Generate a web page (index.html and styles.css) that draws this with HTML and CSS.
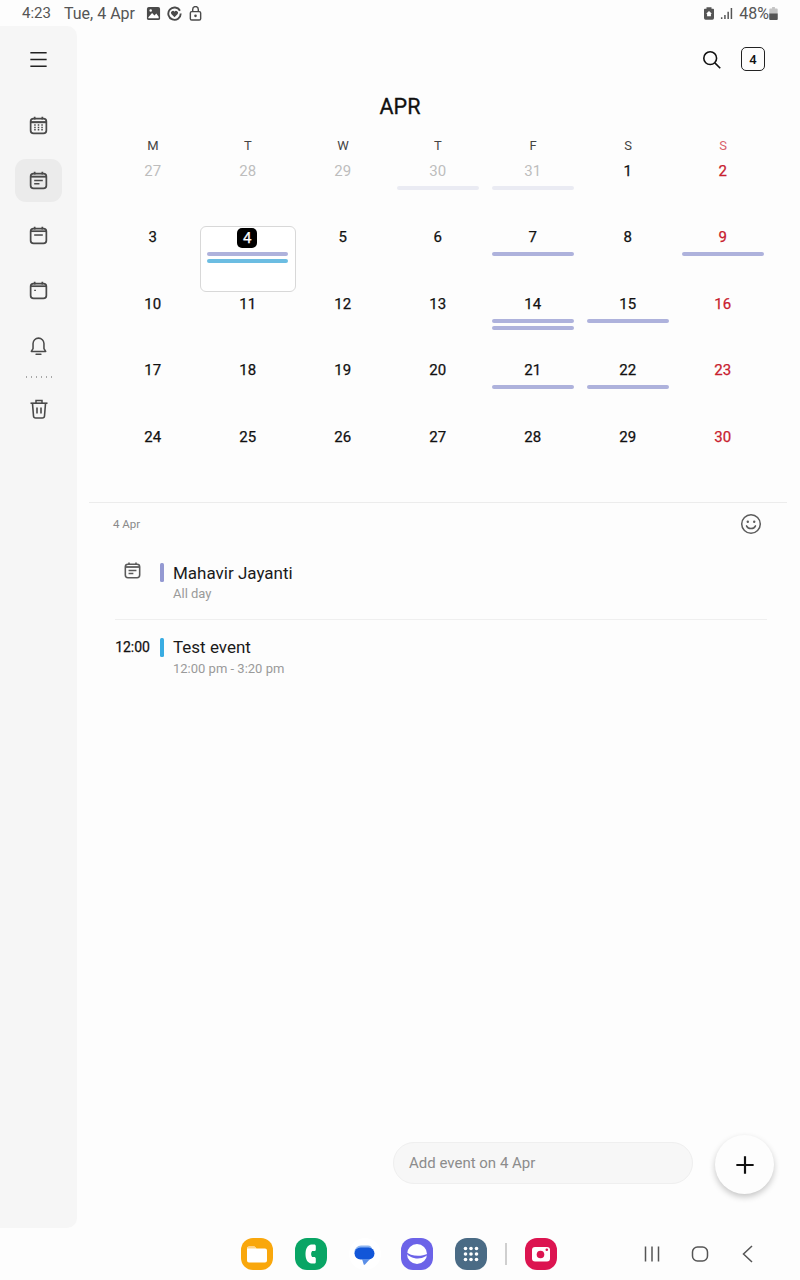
FILE: index.html
```html
<!DOCTYPE html>
<html lang="en">
<head>
<meta charset="utf-8">
<title>Calendar</title>
<link rel="stylesheet" href="styles.css">
</head>
<body>
<div class="status">
  <span class="st-time">4:23</span>
  <span class="st-date">Tue, 4 Apr</span>
  <svg class="st-ico" viewBox="0 0 16 16"><rect x="1" y="1" width="14" height="14" rx="2" fill="#4a4a4a"/><path d="M2.500 12 6.500 7.500 9 10l2-2 2.500 3.500V13h-11z" fill="#fff"/><circle cx="5" cy="4.800" r="1.300" fill="#fff"/></svg>
  <svg class="st-ico" viewBox="0 0 16 16"><path d="M13.800 5A6.600 6.600 0 1 0 14.600 8" fill="none" stroke="#4a4a4a" stroke-width="2"/><path d="M8 12 4.600 8.400a2 2 0 0 1 3.400-2.400 2 2 0 0 1 3.400 2.400z" fill="#4a4a4a"/></svg>
  <svg class="st-ico" viewBox="0 0 16 16"><rect x="2.500" y="6" width="11" height="9" rx="1.500" fill="none" stroke="#4a4a4a" stroke-width="1.500"/><path d="M5 6V3.600a3 3 0 0 1 6 0V6" fill="none" stroke="#4a4a4a" stroke-width="1.500"/><circle cx="8" cy="10.500" r="1.400" fill="#4a4a4a"/></svg>
  <span class="st-fill"></span>
  <svg class="st-alarm" viewBox="0 0 12 16"><path d="M3 1h6v2h2a1 1 0 0 1 1 1v10a2 2 0 0 1-2 2H2a2 2 0 0 1-2-2V4a1 1 0 0 1 1-1h2z" fill="#555"/><path d="M6 5.500 9.500 9H8.300v3H3.700V9H2.500z" fill="#fff"/></svg>
  <svg class="st-signal" viewBox="0 0 14 14"><path d="M1 11h1.600v2H1zM4.500 8.500h1.600V13H4.500zM8 5h1.600v8H8zM11.500 1h1.600v12h-1.600z" fill="#555"/></svg>
  <span class="st-pct">48%</span>
  <svg class="st-batt" viewBox="0 0 9 14"><path d="M3 0h3v1.500h2a1 1 0 0 1 1 1V13a1 1 0 0 1-1 1H1a1 1 0 0 1-1-1V2.500a1 1 0 0 1 1-1h2z" fill="#c4c4c4"/><path d="M0 7h9v6a1 1 0 0 1-1 1H1a1 1 0 0 1-1-1z" fill="#555"/></svg>
</div>

<div class="shell">
  <nav class="side">
    <div class="side-item menu">
      <svg class="side-ico" viewBox="0 0 24 24"><path d="M3.500 5h17M3.500 12h17M3.500 19h17" stroke="#222" stroke-width="1.700" fill="none"/></svg>
    </div>
    <div class="side-item">
      <svg class="side-ico" viewBox="0 0 24 24"><rect x="3.800" y="4.800" width="16.400" height="15.400" rx="3" fill="none" stroke="#4a4a4a" stroke-width="1.800"/><path d="M3.800 8.500h16.400" stroke="#4a4a4a" stroke-width="2.200"/><path d="M8 2.800v3M16 2.800v3" stroke="#4a4a4a" stroke-width="1.800"/><path d="M7.500 11.500h1.600M11.200 11.500h1.600M14.900 11.500h1.600M7.500 14h1.600M11.200 14h1.600M14.900 14h1.600M7.500 16.500h1.600M11.200 16.500h1.600M14.900 16.500h1.600" stroke="#4a4a4a" stroke-width="1.500"/></svg>
    </div>
    <div class="side-item active">
      <svg class="side-ico" viewBox="0 0 24 24"><rect x="3.800" y="4.800" width="16.400" height="15.400" rx="3" fill="none" stroke="#4a4a4a" stroke-width="1.800"/><path d="M3.800 8h16.400" stroke="#4a4a4a" stroke-width="2"/><path d="M8 2.800v3M16 2.800v3" stroke="#4a4a4a" stroke-width="1.800"/><path d="M7.500 12h9M7.500 15.500h5.500" stroke="#4a4a4a" stroke-width="1.600"/></svg>
    </div>
    <div class="side-item">
      <svg class="side-ico" viewBox="0 0 24 24"><rect x="3.800" y="4.800" width="16.400" height="15.400" rx="3" fill="none" stroke="#4a4a4a" stroke-width="1.800"/><path d="M3.800 7.500h16.400" stroke="#4a4a4a" stroke-width="1.800"/><path d="M8 2.800v3M16 2.800v3" stroke="#4a4a4a" stroke-width="1.800"/><path d="M7.500 11.500h9" stroke="#4a4a4a" stroke-width="1.600"/></svg>
    </div>
    <div class="side-item">
      <svg class="side-ico" viewBox="0 0 24 24"><rect x="3.800" y="4.800" width="16.400" height="15.400" rx="3" fill="none" stroke="#4a4a4a" stroke-width="1.800"/><path d="M3.800 7.500h16.400" stroke="#4a4a4a" stroke-width="1.800"/><path d="M8 2.800v3M16 2.800v3" stroke="#4a4a4a" stroke-width="1.800"/><path d="M7.500 11.800h1.800" stroke="#4a4a4a" stroke-width="1.400"/></svg>
    </div>
    <div class="side-item">
      <svg class="side-ico" viewBox="0 0 24 24"><path d="M4.500 18.200h15l-1.800-3V10a5.700 5.700 0 0 0-11.400 0v5.200z" fill="none" stroke="#4a4a4a" stroke-width="1.600" stroke-linejoin="round"/><path d="M9.500 21.200h5" stroke="#4a4a4a" stroke-width="1.600" stroke-linecap="round"/></svg>
    </div>
    <div class="side-dots"></div>
    <div class="side-item">
      <svg class="side-ico trash" viewBox="0 0 24 24"><path d="M3.500 6.200h17" stroke="#4a4a4a" stroke-width="1.600"/><path d="M9 6V3.500h6V6" fill="none" stroke="#4a4a4a" stroke-width="1.500"/><path d="M5.500 6.500 6.500 19a2.200 2.200 0 0 0 2.200 2h6.600a2.200 2.200 0 0 0 2.200-2l1-12.500" fill="none" stroke="#4a4a4a" stroke-width="1.600"/><path d="M10 10.500v6M14 10.500v6" stroke="#4a4a4a" stroke-width="1.600"/></svg>
    </div>
  </nav>

  <main class="main">
    <div class="toolbar">
      <svg class="search" viewBox="0 0 24 24"><circle cx="10.500" cy="10.500" r="7.300" fill="none" stroke="#111" stroke-width="1.800"/><path d="M15.800 15.800 22 22" stroke="#111" stroke-width="1.800"/></svg>
      <span class="today">4</span>
    </div>
    <h1 class="month">APR</h1>
    <div class="weekdays">
      <span>M</span><span>T</span><span>W</span><span>T</span><span>F</span><span>S</span><span class="sun">S</span>
    </div>
    <div class="grid">
      <div class="cell off"><span class="num">27</span></div>
      <div class="cell off"><span class="num">28</span></div>
      <div class="cell off"><span class="num">29</span></div>
      <div class="cell off"><span class="num">30</span><i class="bar faint"></i></div>
      <div class="cell off"><span class="num">31</span><i class="bar faint"></i></div>
      <div class="cell"><span class="num">1</span></div>
      <div class="cell red"><span class="num">2</span></div>

      <div class="cell"><span class="num">3</span></div>
      <div class="cell selected"><span class="num">4</span><i class="bar"></i><i class="bar blue"></i></div>
      <div class="cell"><span class="num">5</span></div>
      <div class="cell"><span class="num">6</span></div>
      <div class="cell"><span class="num">7</span><i class="bar"></i></div>
      <div class="cell"><span class="num">8</span></div>
      <div class="cell red"><span class="num">9</span><i class="bar"></i></div>

      <div class="cell"><span class="num">10</span></div>
      <div class="cell"><span class="num">11</span></div>
      <div class="cell"><span class="num">12</span></div>
      <div class="cell"><span class="num">13</span></div>
      <div class="cell"><span class="num">14</span><i class="bar"></i><i class="bar"></i></div>
      <div class="cell"><span class="num">15</span><i class="bar"></i></div>
      <div class="cell red"><span class="num">16</span></div>

      <div class="cell"><span class="num">17</span></div>
      <div class="cell"><span class="num">18</span></div>
      <div class="cell"><span class="num">19</span></div>
      <div class="cell"><span class="num">20</span></div>
      <div class="cell"><span class="num">21</span><i class="bar"></i></div>
      <div class="cell"><span class="num">22</span><i class="bar"></i></div>
      <div class="cell red"><span class="num">23</span></div>

      <div class="cell"><span class="num">24</span></div>
      <div class="cell"><span class="num">25</span></div>
      <div class="cell"><span class="num">26</span></div>
      <div class="cell"><span class="num">27</span></div>
      <div class="cell"><span class="num">28</span></div>
      <div class="cell"><span class="num">29</span></div>
      <div class="cell red"><span class="num">30</span></div>
    </div>

    <div class="rule"></div>
    <div class="day-head">
      <span class="day-label">4 Apr</span>
      <svg class="smile" viewBox="0 0 22 22"><circle cx="11" cy="11" r="9.300" fill="none" stroke="#5c5c5c" stroke-width="1.500"/><circle cx="7.800" cy="8.800" r="1.200" fill="#5c5c5c"/><circle cx="14.200" cy="8.800" r="1.200" fill="#5c5c5c"/><path d="M6.500 12.800a5 5 0 0 0 9 0" fill="none" stroke="#5c5c5c" stroke-width="1.500" stroke-linecap="round"/></svg>
    </div>

    <div class="event first">
      <div class="ev-lead">
        <svg class="ev-ico" viewBox="0 0 24 24"><rect x="3.800" y="4.800" width="16.400" height="15.400" rx="3" fill="none" stroke="#5a5a5a" stroke-width="1.800"/><path d="M3.800 8h16.400" stroke="#5a5a5a" stroke-width="2"/><path d="M8 2.800v3M16 2.800v3" stroke="#5a5a5a" stroke-width="1.800"/><path d="M7.500 12h9M7.500 15.500h5.500" stroke="#5a5a5a" stroke-width="1.600"/></svg>
      </div>
      <i class="ev-bar"></i>
      <div class="ev-text">
        <div class="ev-title">Mahavir Jayanti</div>
        <div class="ev-sub">All day</div>
      </div>
    </div>
    <div class="ev-rule"></div>
    <div class="event">
      <div class="ev-lead"><span class="ev-time">12:00</span></div>
      <i class="ev-bar blue"></i>
      <div class="ev-text">
        <div class="ev-title">Test event</div>
        <div class="ev-sub">12:00 pm - 3:20 pm</div>
      </div>
    </div>

    <div class="add-row">
      <div class="add-input">Add event on 4 Apr</div>
      <div class="fab"><svg viewBox="0 0 22 22"><path d="M11 1.500v19M1.500 11h19" stroke="#111" stroke-width="2.400"/></svg></div>
    </div>
  </main>
</div>

<footer class="dock">
  <div class="apps">
    <span class="app files"><svg viewBox="0 0 32 32"><path d="M6 10.500A2 2 0 0 1 8 8.500h5.500l2 2H24a2 2 0 0 1 2 2v10a2 2 0 0 1-2 2H8a2 2 0 0 1-2-2z" fill="#fff"/><path d="M6 10.500A2 2 0 0 1 8 8.500h5.500l2 2H6z" fill="#ffd58a"/></svg></span>
    <span class="app phone"><svg viewBox="0 0 32 32"><path d="M19 6.500h-2.500C12.500 7 10.500 10.500 10.500 16s2 9 6 9.500H19c1.200 0 1.800-.7 1.800-1.600v-3.300c0-.9-.7-1.600-1.700-1.600h-2c-.7-1-1-2-1-3s.3-2 1-3h2c1 0 1.700-.7 1.700-1.600V8.100c0-.9-.6-1.600-1.800-1.600z" fill="#fff"/></svg></span>
    <span class="app msg"><svg viewBox="0 0 32 32"><path d="M5.500 14a6.500 6.500 0 0 1 6.500-6.500h7a4 4 0 0 1 4 3.500H12c-2.500 0-4.500 1.500-5 4.500-.5 0-1.500-.5-1.500-1.500z" fill="#8db4f0"/><rect x="5.500" y="9.500" width="20" height="12" rx="6" fill="#1256d8"/><path d="M13 21h8l-5 5.500c-.8.500-1.500 0-1.500-.8z" fill="#5b8fe8"/></svg></span>
    <span class="app net"><svg viewBox="0 0 32 32"><circle cx="16" cy="16" r="10" fill="#fff"/><path d="M4.500 13.500c5 4.500 14 6 23 2 -.5 2-7 6.500-14.500 4.500-5-1.300-8-4-8.500-6.500z" fill="#6c63e8"/></svg></span>
    <span class="app grid-app"><svg viewBox="0 0 32 32"><g fill="#fff"><circle cx="10.500" cy="10.500" r="1.800"/><circle cx="16" cy="10.500" r="1.800"/><circle cx="21.500" cy="10.500" r="1.800"/><circle cx="10.500" cy="16" r="1.800"/><circle cx="16" cy="16" r="1.800"/><circle cx="21.500" cy="16" r="1.800"/><circle cx="10.500" cy="21.500" r="1.800"/><circle cx="16" cy="21.500" r="1.800"/><circle cx="21.500" cy="21.500" r="1.800"/></g></svg></span>
    <i class="dock-sep"></i>
    <span class="app cam"><svg viewBox="0 0 32 32"><rect x="7" y="9" width="18" height="14.500" rx="3" fill="#fff"/><circle cx="15.500" cy="16.500" r="3.800" fill="#dc1450"/><circle cx="21.800" cy="11.800" r="1.300" fill="#dc1450"/></svg></span>
  </div>
  <div class="sysnav">
    <svg viewBox="0 0 20 20"><path d="M3.500 2.500v15M10 2.500v15M16.500 2.500v15" stroke="#555" stroke-width="1.500" fill="none"/></svg>
    <svg viewBox="0 0 20 20"><rect x="2.500" y="3" width="15" height="14" rx="5" stroke="#555" stroke-width="1.500" fill="none"/></svg>
    <svg viewBox="0 0 20 20"><path d="M14 2 5.500 10l8.500 8" stroke="#555" stroke-width="1.500" fill="none"/></svg>
  </div>
</footer>
</body>
</html>
```
FILE: styles.css
```css
* { box-sizing: border-box; }
html, body { margin: 0; padding: 0; }
body {
  width: 800px;
  height: 1280px;
  overflow: hidden;
  background: #fdfdfd;
  font-family: Roboto, "Liberation Sans", sans-serif;
  color: #111;
  display: flex;
  flex-direction: column;
}

/* status bar */
.status {
  height: 26px;
  flex: none;
  display: flex;
  align-items: center;
  padding: 0 22px;
  font-size: 15px;
  color: #555;
}
.st-date { font-size: 16px; margin-left: 13px; margin-right: 11px; }
.st-ico { width: 15px; height: 15px; margin-right: 6px; }
.st-fill { flex: 1; }
.st-alarm { width: 10px; height: 14px; margin-right: 6px; }
.st-signal { width: 13px; height: 13px; margin-right: 6px; }
.st-pct { font-size: 16px; }
.st-batt { width: 9px; height: 13px; }

/* frame */
.shell { flex: 1; display: flex; min-height: 0; }

.side {
  width: 77px;
  flex: none;
  background: #f6f6f6;
  border-radius: 0 10px 10px 0;
  padding: 11px 15px 0;
  display: flex;
  flex-direction: column;
  gap: 12px;
}
.side-item {
  width: 47px;
  height: 43px;
  flex: none;
  border-radius: 11px;
  display: flex;
  align-items: center;
  justify-content: center;
}
.side-item.menu { margin-top: 1px; margin-bottom: 11px; }
.side-item.active { background: #ebebeb; }
.side-ico { width: 23px; height: 23px; }
.side-ico.trash { width: 24px; height: 24px; }
.side-dots {
  height: 2px;
  width: 30px;
  flex: none;
  margin: -3px 0 -3px 9px;
  background: radial-gradient(circle at center, #a8a8a8 0 .8px, transparent 1px) 0 0 / 5px 2px repeat-x;
}

/* main */
.main { flex: 1; min-width: 0; display: flex; flex-direction: column; }

.toolbar {
  height: 66px;
  flex: none;
  display: flex;
  align-items: center;
  justify-content: flex-end;
  padding-right: 35px;
  gap: 19px;
}
.search { width: 21px; height: 21px; }
.today {
  width: 24px;
  height: 24px;
  border: 1.700px solid #222;
  border-radius: 5px;
  font-size: 13px;
  font-weight: 500;
  display: flex;
  align-items: center;
  justify-content: center;
}

.month {
  margin: 0;
  height: 28px;
  line-height: 30px;
  padding-right: 77px;
  text-align: center;
  font-size: 21.500px;
  font-weight: 400;
  -webkit-text-stroke: .3px #111;
  color: #111;
}

.weekdays, .grid {
  display: grid;
  grid-template-columns: repeat(7, 95px);
  margin-left: 28.500px;
}
.weekdays {
  margin-top: 15.500px;
  margin-bottom: 5px;
  height: 19px;
  line-height: 19px;
  text-align: center;
  font-size: 13px;
  color: #444;
}
.weekdays .sun { color: #d9626c; }

.grid { grid-auto-rows: 66.500px; }
.cell {
  display: flex;
  flex-direction: column;
  align-items: center;
  padding: 0 6.500px 0 6px;
  font-size: 15px;
  font-weight: 400;
  -webkit-text-stroke: .25px currentColor;
  color: #111;
}
.num {
  height: 23px;
  min-width: 20px;
  line-height: 23px;
  text-align: center;
  margin-bottom: 3px;
}
.off { color: #bdbdbd; -webkit-text-stroke: 0; }
.red { color: #c8202e; }

.bar {
  display: block;
  width: 100%;
  height: 4px;
  flex: none;
  border-radius: 2px;
  background: #aeb2dc;
  margin-bottom: 3px;
}
.bar.faint { background: #eaebf3; }
.bar.blue { background: #6cbde2; }

.selected {
  margin-left: -1px;
  margin-bottom: 1px;
  border: 1px solid #d8d8d8;
  border-radius: 6px;
  background: #fff;
}
.selected .num {
  height: 20px;
  width: 20px;
  min-width: 0;
  line-height: 20px;
  margin-top: 1px;
  margin-bottom: 4px;
  background: #000;
  color: #fff;
  border-radius: 5px;
}

.rule {
  height: 1px;
  flex: none;
  margin: 10px 13px 0 12px;
  background: #ececec;
}

.day-head {
  height: 42px;
  flex: none;
  display: flex;
  align-items: center;
  justify-content: space-between;
  padding: 0 38px 0 36px;
}
.day-label { font-size: 11.500px; color: #8a8a8a; }
.smile { width: 22px; height: 22px; }

.event {
  display: flex;
  height: 74px;
  flex: none;
  padding-top: 18px;
}
.ev-lead {
  width: 83px;
  flex: none;
  display: flex;
  justify-content: flex-end;
  padding-right: 10px;
}
.first .ev-lead { padding-right: 17px; }
.ev-text { margin-top: -1px; }
.first .ev-text { margin-top: 0; }
.ev-ico { width: 21px; height: 21px; margin-top: -3px; }
.ev-time { font-size: 14px; -webkit-text-stroke: .25px #111; line-height: 16px; margin-top: 1px; }
.ev-bar {
  display: block;
  width: 4px;
  height: 19px;
  flex: none;
  border-radius: 1.500px;
  background: #9499d2;
  margin-right: 9px;
}
.ev-bar.blue { background: #39ace2; }
.ev-title { font-size: 17px; line-height: 20px; color: #1a1a1a; }
.ev-sub { font-size: 13px; line-height: 16px; color: #9a9a9a; margin-top: 3px; }
.event:not(.first) .ev-sub { margin-top: 4px; }
.ev-rule {
  height: 1px;
  flex: none;
  margin: 0 33px 0 38px;
  background: #efefef;
}

.add-row {
  margin-top: auto;
  margin-bottom: 34px;
  display: flex;
  align-items: flex-start;
  justify-content: flex-end;
  padding-right: 26px;
  gap: 22px;
}
.add-input {
  width: 300px;
  height: 42px;
  margin-top: 7px;
  border-radius: 21px;
  background: #f7f7f7;
  border: 1px solid #efefef;
  padding-left: 15px;
  line-height: 41px;
  font-size: 15px;
  color: #8c8c8c;
}
.fab {
  width: 59px;
  height: 59px;
  border-radius: 50%;
  background: #fdfdfd;
  box-shadow: 0 3px 6px rgba(0,0,0,.22);
  display: flex;
  align-items: center;
  justify-content: center;
}
.fab svg { width: 20px; height: 20px; }

/* dock */
.dock {
  height: 52px;
  flex: none;
  display: flex;
  align-items: center;
  justify-content: space-between;
  padding: 0 42px 0 241px;
}
.apps { display: flex; align-items: center; gap: 22px; }
.app { width: 32px; height: 32px; border-radius: 12px; display: block; }
.app svg { display: block; width: 32px; height: 32px; }
.files { background: #f9a70c; }
.phone { background: #09a565; }
.msg { background: #fff; border-radius: 50%; }
.net { background: #6c63e8; margin-left: -2px; }
.grid-app { background: #4a6b85; }
.cam { background: #dc1450; }
.dock-sep { display: block; width: 1.500px; height: 22px; background: #cfcfcf; margin: 0 -4px; }
.sysnav { display: flex; gap: 28px; }
.sysnav svg { width: 20px; height: 20px; display: block; }
```
